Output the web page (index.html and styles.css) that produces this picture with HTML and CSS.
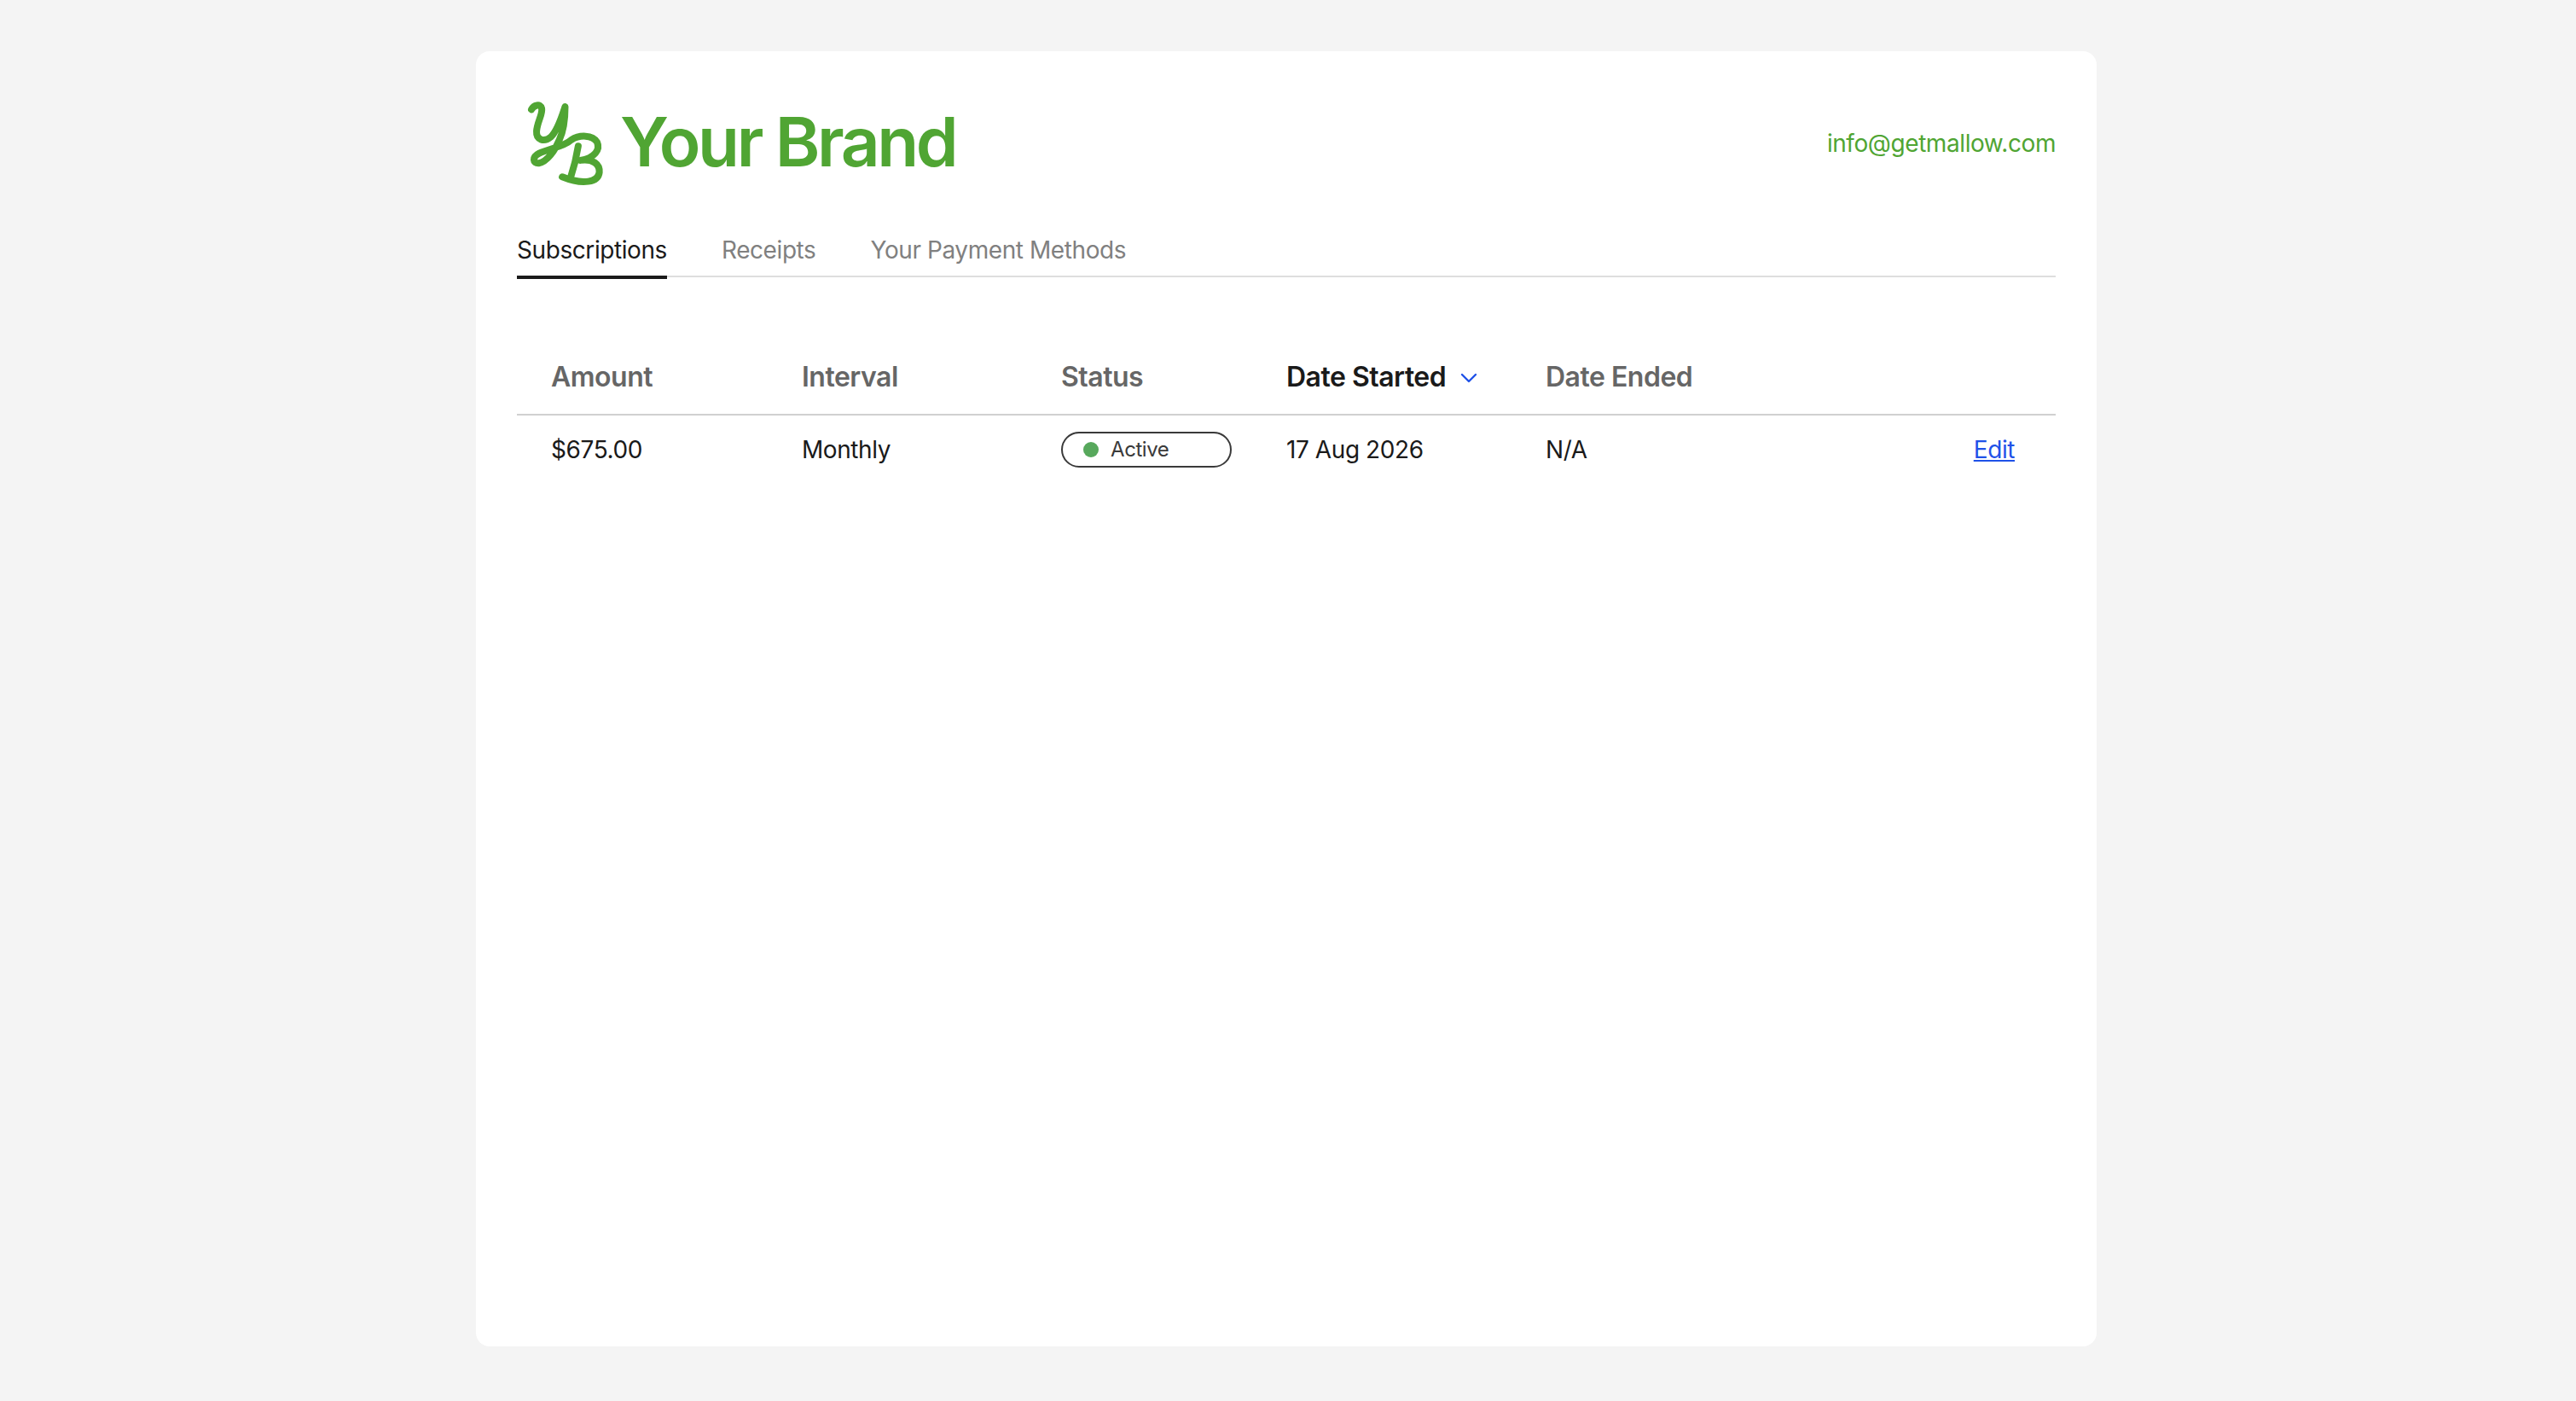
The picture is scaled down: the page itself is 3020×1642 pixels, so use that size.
FILE: index.html
```html
<!DOCTYPE html>
<html lang="en">
<head>
    <meta charset="UTF-8">
    <meta name="viewport" content="width=device-width, initial-scale=1.0">
    <title>Subscriptions</title>
    <link rel="stylesheet" href="styles.css">
</head>
<body>
    <main class="card">
        <header class="header">
            <div class="brand">
                <svg class="brand-mark" viewBox="50 50 275 305" fill="none" stroke="#50a533" stroke-width="24" stroke-linecap="round" stroke-linejoin="round">
                    <path d="M68 84C76 68 100 62 104 80C108 100 88 128 86 160C84 190 112 200 136 180C160 158 176 104 186 74C186 112 180 160 166 190C152 226 122 268 94 272C72 274 70 250 94 238C130 220 180 216 208 190C236 172 282 172 298 198C310 224 290 254 240 262C284 256 308 276 306 304C302 338 250 350 176 320"/>
                    <path d="M232 212C226 250 216 290 206 320"/>
                </svg>
                <span class="brand-name">Your Brand</span>
            </div>
            <a class="contact" href="#">info@getmallow.com</a>
        </header>

        <nav class="tabs">
            <a class="tab active" href="#">Subscriptions</a>
            <a class="tab" href="#">Receipts</a>
            <a class="tab" href="#">Your Payment Methods</a>
        </nav>

        <table class="subscriptions">
            <thead>
                <tr>
                    <th class="col-amount">Amount</th>
                    <th class="col-interval">Interval</th>
                    <th class="col-status">Status</th>
                    <th class="col-started sorted">
                        Date Started
                        <svg class="sort-icon" viewBox="0 0 20 12" fill="none" stroke="#1f51e8" stroke-width="2.4" stroke-linecap="round" stroke-linejoin="round">
                            <path d="M2 2l8 8 8-8"/>
                        </svg>
                    </th>
                    <th class="col-ended">Date Ended</th>
                    <th></th>
                </tr>
            </thead>
            <tbody>
                <tr>
                    <td class="amount">$675.00</td>
                    <td>Monthly</td>
                    <td><span class="status"><span class="status-dot"></span>Active</span></td>
                    <td>17 Aug 2026</td>
                    <td>N/A</td>
                    <td class="actions"><a class="edit" href="#">Edit</a></td>
                </tr>
            </tbody>
        </table>
    </main>
</body>
</html>
```

FILE: styles.css
```css
* {
    box-sizing: border-box;
}
body {
    margin: 0;
    padding-top: 60px;
    min-height: 100vh;
    background-color: #f4f4f4;
    font-family: Inter, "Liberation Sans", sans-serif;
    letter-spacing: -0.42px;
    color: #1a1a1a;
}
.card {
    width: 1900px;
    height: 1518px;
    margin-left: 558px;
    padding: 57px 48px 0;
    background-color: #fff;
    border-radius: 16px;
}
.header {
    display: flex;
    justify-content: space-between;
    align-items: center;
}
.brand {
    display: flex;
    align-items: center;
    gap: 18px;
    margin-left: 11px;
}
.brand-mark {
    width: 92px;
    height: 102px;
}
.brand-name {
    margin-bottom: 4px;
    font-size: 80px;
    font-weight: 600;
    letter-spacing: -3.4px;
    line-height: 98px;
    color: #50a533;
}
.contact {
    font-size: 28px;
    color: #50a533;
    text-decoration: none;
}
.tabs {
    display: flex;
    gap: 64px;
    margin-top: 57px;
    border-bottom: 2px solid #dedede;
}
.tab {
    padding-bottom: 13px;
    margin-bottom: -4px;
    border-bottom: 4px solid transparent;
    font-size: 28px;
    line-height: 34px;
    color: #808080;
    text-decoration: none;
}
.tab.active {
    border-bottom-color: #1a1a1a;
    color: #1a1a1a;
}
.subscriptions {
    width: 100%;
    margin-top: 78px;
    border-collapse: collapse;
    table-layout: fixed;
}
.subscriptions th {
    padding: 20px 0 24px 41px;
    border-bottom: 2px solid #d0d0d0;
    font-size: 32px;
    font-weight: 600;
    letter-spacing: -0.5px;
    line-height: 38px;
    text-align: left;
    color: #666;
    white-space: nowrap;
}
.subscriptions td {
    padding: 19px 0 19px 41px;
    font-size: 28px;
    line-height: 42px;
}
.subscriptions th.col-amount,
.subscriptions td.amount {
    padding-left: 40px;
}
.col-amount {
    width: 293px;
}
.col-interval {
    width: 304px;
}
.col-status {
    width: 264px;
}
.col-started {
    width: 304px;
}
.subscriptions th.sorted {
    color: #1a1a1a;
}
.sort-icon {
    width: 20px;
    height: 12px;
    margin-left: 9px;
    vertical-align: 4px;
}
.status {
    display: flex;
    align-items: center;
    width: 200px;
    height: 42px;
    padding-left: 24px;
    border: 2px solid #3a3a3a;
    border-radius: 21px;
    font-size: 24px;
    color: #3a3a3a;
}
.status-dot {
    width: 18px;
    height: 18px;
    margin-right: 14px;
    border-radius: 50%;
    background-color: #57a85c;
}
.subscriptions td.actions {
    padding-right: 48px;
    text-align: right;
}
.edit {
    color: #1f51e8;
}
```
